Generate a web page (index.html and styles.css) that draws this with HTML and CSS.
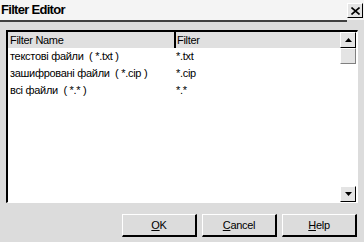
FILE: index.html
```html
<!DOCTYPE html>
<html lang="uk">
	<head>
		<meta charset="UTF-8" />
		<title>Filter Editor</title>
		<link rel="stylesheet" href="styles.css">
	</head>
	<body>
		<div class="titlebar">
			<div class="title">Filter Editor</div>
			<div class="close-area">
				<div class="close">
					<svg width="9" height="8" viewBox="0 0 9 8">
						<path d="M0.5 0.5 L8.5 7.5 M8.5 0.5 L0.5 7.5" stroke="#000" stroke-width="1.6" fill="none" />
					</svg>
				</div>
			</div>
		</div>

		<div class="list">
			<div class="list-body">
				<div class="list-head">
					<div class="col-name">Filter Name</div>
					<div class="col-filter">Filter</div>
				</div>
				<div class="list-row">
					<div class="col-name">текстові файли  ( *.txt )</div>
					<div class="col-filter">*.txt</div>
				</div>
				<div class="list-row">
					<div class="col-name">зашифровані файли  ( *.cip )</div>
					<div class="col-filter">*.cip</div>
				</div>
				<div class="list-row">
					<div class="col-name">всі файли  ( *.* )</div>
					<div class="col-filter">*.*</div>
				</div>
			</div>
			<div class="scrollbar">
				<div class="sb-btn">
					<svg width="7" height="4" viewBox="0 0 7 4"><path d="M3.5 0 L7 4 L0 4 Z" fill="#000" /></svg>
				</div>
				<div class="sb-thumb"></div>
				<div class="sb-track"></div>
				<div class="sb-btn">
					<svg width="7" height="4" viewBox="0 0 7 4"><path d="M0 0 L7 0 L3.5 4 Z" fill="#000" /></svg>
				</div>
			</div>
		</div>

		<div class="buttons">
			<button class="btn"><u>O</u>K</button>
			<button class="btn"><u>C</u>ancel</button>
			<button class="btn"><u>H</u>elp</button>
		</div>
	</body>
</html>
```

FILE: styles.css
```css
body {
	margin: 0;
	width: 364px;
	height: 242px;
	background: #dcdcdc;
	font-family: "Liberation Sans", Arial, sans-serif;
	font-size: 11px;
	letter-spacing: -0.3px;
	color: #000;
	overflow: hidden;
}
.titlebar {
	display: flex;
	height: 22px;
}
.title {
	width: 346px;
	height: 20px;
	line-height: 20px;
	padding-left: 1px;
	background: #f4f4f4;
	border-bottom: 2px solid #404040;
	font-weight: bold;
	font-size: 13px;
	letter-spacing: -0.7px;
}
.close-area {
	width: 17px;
	height: 20px;
	background: #f4f4f4;
}
.close {
	width: 14px;
	height: 13px;
	margin: 3px 0 0 0;
	border-top: 1px solid #fff;
	border-left: 1px solid #fff;
	border-right: 1px solid #000;
	border-bottom: 1px solid #000;
	background: #e4e4e4;
	display: flex;
	align-items: center;
	justify-content: center;
}
.list {
	display: flex;
	margin: 8px 0 0 6px;
	width: 349px;
	height: 170px;
	border-top: 2px solid #000;
	border-left: 2px solid #000;
	border-right: 1px solid #fff;
	border-bottom: 1px solid #fff;
	background: #fff;
}
.list-body {
	width: 332px;
}
.list-head {
	display: flex;
	height: 16px;
	line-height: 16px;
	background: #e0e0e0;
}
.list-row {
	display: flex;
	height: 17px;
	line-height: 17px;
}
.col-name {
	width: 164px;
	padding-left: 2px;
	white-space: pre;
}
.col-filter {
	flex: 1;
	padding-left: 2px;
}
.list-head .col-filter {
	border-left: 2px solid #000;
	padding-left: 1px;
}
.scrollbar {
	width: 16px;
	display: flex;
	flex-direction: column;
	background: #fff;
}
.sb-btn {
	height: 14px;
	background: #e4e4e4;
	border-top: 1px solid #fff;
	border-left: 1px solid #fff;
	border-right: 1px solid #000;
	border-bottom: 1px solid #000;
	display: flex;
	align-items: center;
	justify-content: center;
}
.sb-thumb {
	height: 14px;
	background: #e4e4e4;
	border-top: 1px solid #fff;
	border-left: 1px solid #fff;
	border-right: 1px solid #808080;
	border-bottom: 1px solid #808080;
}
.sb-track {
	flex: 1;
}
.buttons {
	display: flex;
	justify-content: flex-end;
	gap: 5px;
	padding: 11px 7px 0 0;
}
.btn {
	width: 75px;
	height: 23px;
	background: #dcdcdc;
	border-top: 1px solid #fff;
	border-left: 1px solid #fff;
	border-right: 2px solid #000;
	border-bottom: 2px solid #000;
	font-family: "Liberation Sans", Arial, sans-serif;
	font-size: 11px;
	letter-spacing: -0.3px;
	color: #000;
	padding: 0;
}
```
